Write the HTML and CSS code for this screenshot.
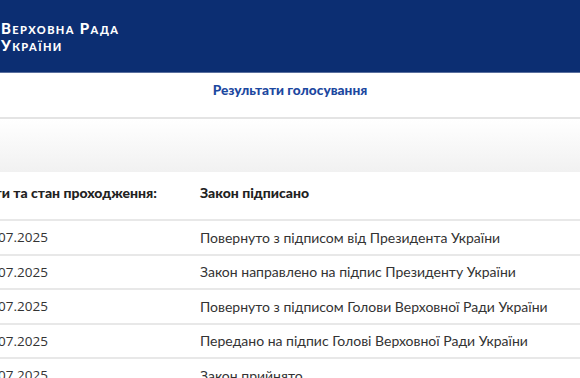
FILE: index.html
```html
<!DOCTYPE html>
<html lang="uk">
<head>
<meta charset="utf-8">
<link rel="stylesheet" href="styles.css">
</head>
<body>
<header class="top">
  <div class="brand">Верховна Рада<br>України</div>
</header>
<nav class="tabs">
  <a class="tab" href="#">Результати голосування</a>
</nav>
<div class="band"></div>
<section class="stages">
  <div class="row head">
    <div class="c1">Дати та стан проходження:</div>
    <div class="c2">Закон підписано</div>
  </div>
  <div class="row">
    <div class="c1">18.07.2025</div>
    <div class="c2">Повернуто з підписом від Президента України</div>
  </div>
  <div class="row">
    <div class="c1">16.07.2025</div>
    <div class="c2">Закон направлено на підпис Президенту України</div>
  </div>
  <div class="row">
    <div class="c1">16.07.2025</div>
    <div class="c2">Повернуто з підписом Голови Верховної Ради України</div>
  </div>
  <div class="row">
    <div class="c1">15.07.2025</div>
    <div class="c2">Передано на підпис Голові Верховної Ради України</div>
  </div>
  <div class="row">
    <div class="c1">15.07.2025</div>
    <div class="c2">Закон прийнято</div>
  </div>
</section>
</body>
</html>
```
FILE: styles.css
```css
html, body {
  margin: 0;
  padding: 0;
  background: #ffffff;
  overflow: hidden;
}
body {
  font-family: "Lato", "Open Sans", sans-serif;
  color: #333;
}
.top {
  height: 73px;
  background: #0c2e72;
  border-bottom: 1px solid #5a6f9e;
  box-sizing: border-box;
  padding: 20px 0 0 1px;
}
.brand {
  color: #fff;
  font-family: "Lato", sans-serif;
  font-weight: 900;
  font-size: 15px;
  font-variant: small-caps;
  letter-spacing: 1.4px;
  line-height: 17px;
}
.tabs {
  height: 46px;
  display: flex;
  align-items: center;
  justify-content: center;
  padding-bottom: 12px;
  border-bottom: 2px solid #e4e4e4;
  box-sizing: border-box;
}
.tab {
  color: #1c48a0;
  font-family: "Lato", sans-serif;
  font-weight: 900;
  font-size: 13.7px;
  text-decoration: none;
}
.band {
  height: 53px;
  background: linear-gradient(#ffffff, #f1f1f1);
}
.stages {
  margin-left: -21px;
}
.row {
  display: grid;
  grid-template-columns: 221px 1fr;
  height: 34.5px;
  align-items: center;
  border-bottom: 2px solid #e8e8e8;
  box-sizing: border-box;
  font-size: 14px;
}
.row.head {
  height: 49px;
  font-family: "Lato", sans-serif;
  font-weight: 900;
  font-size: 14px;
  color: #222;
  padding-bottom: 7px;
}
.c1 {
  font-family: "Open Sans", sans-serif;
  font-size: 13.5px;
}
.row.head .c1 {
  font-family: "Lato", sans-serif;
  font-size: 14px;
  margin-left: -3px;
}
```
